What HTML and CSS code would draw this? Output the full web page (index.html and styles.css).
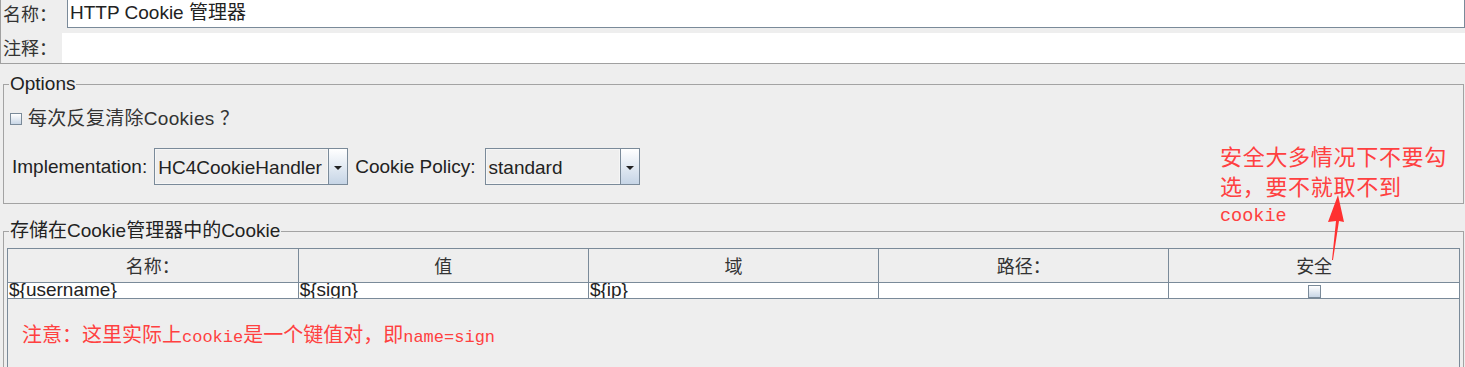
FILE: index.html
```html
<!DOCTYPE html>
<html lang="zh">
<head>
    <meta charset="UTF-8">
    <title>HTTP Cookie 管理器</title>
    <link rel="stylesheet" href="styles.css">
</head>
<body>
    <div class="top-panel">
        <div class="field-row name-row">
            <label class="field-label">名称：</label>
            <div class="text-field">HTTP Cookie 管理器</div>
        </div>
        <div class="field-row comment-row">
            <label class="field-label">注释：</label>
            <div class="text-field plain"></div>
        </div>
    </div>

    <fieldset class="group options">
        <legend>Options</legend>
        <div class="check-row">
            <span class="checkbox"></span>
            <span class="check-label">每次反复清除Cookies ？</span>
        </div>
        <div class="combo-row">
            <span class="combo-label">Implementation:</span>
            <div class="combo impl">
                <div class="combo-value">HC4CookieHandler</div>
                <div class="combo-btn"><span class="arrow"></span></div>
            </div>
            <span class="combo-label">Cookie Policy:</span>
            <div class="combo policy">
                <div class="combo-value">standard</div>
                <div class="combo-btn"><span class="arrow"></span></div>
            </div>
        </div>
    </fieldset>

    <fieldset class="group cookies">
        <legend>存储在Cookie管理器中的Cookie</legend>
        <div class="table-pane">
            <table class="cookie-table">
                <thead>
                    <tr>
                        <th>名称：</th>
                        <th>值</th>
                        <th>域</th>
                        <th>路径：</th>
                        <th>安全</th>
                    </tr>
                </thead>
                <tbody>
                    <tr>
                        <td><div class="cell">${username}</div></td>
                        <td><div class="cell">${sign}</div></td>
                        <td><div class="cell">${ip}</div></td>
                        <td><div class="cell"></div></td>
                        <td><div class="cell center"><span class="checkbox small"></span></div></td>
                    </tr>
                </tbody>
            </table>
        </div>
    </fieldset>

    <!-- annotations drawn over the screenshot -->
    <div class="note note-secure">安全大多情况下不要勾<br>选，要不就取不到<br><span class="mono">cookie</span></div>
    <svg class="note-arrow" width="30" height="75" viewBox="0 0 30 75">
        <polygon points="13,0 19,27 14,26 8,65 7,65 11,26 3,27" fill="#ff3030"/>
    </svg>
    <div class="note note-pair">注意：这里实际上<span class="mono">cookie</span>是一个键值对，即<span class="mono">name=sign</span></div>
</body>
</html>
```

FILE: styles.css
```css
* {
    margin: 0;
    padding: 0;
    box-sizing: border-box;
}

body {
    font-family: "Liberation Sans", "Noto Sans CJK SC", sans-serif;
    font-size: 19px;
    color: #222;
    background: #eeeeee;
    width: 1465px;
    height: 367px;
    overflow: hidden;
    position: relative;
}

/* name / comment */
.top-panel {
    border-left: 1px solid #a0a0a0;
    border-bottom: 1px solid #a0a0a0;
    height: 64px;
}

.field-row {
    display: flex;
}

.name-row {
    height: 28px;
}

.comment-row {
    margin-top: 5px;
    height: 30px;
}

.field-label {
    font-family: "Noto Sans CJK SC", sans-serif;
    font-size: 18px;
    line-height: 26px;
    color: #333;
    padding-left: 2px;
    width: 66px;
}

.comment-row .field-label {
    width: 61px;
    line-height: 28px;
}

.text-field {
    flex: 1;
    background: white;
    border: 1px solid #7a8a99;
    border-top: 0;
    padding-left: 2px;
    line-height: 26px;
}

.text-field.plain {
    border: 0;
}

/* groups */
.group {
    border: 1px solid #a3a3a3;
    margin: 9px 1px 0 3px;
    min-width: 0;
}

.group legend {
    font-size: 19px;
    line-height: 22px;
    padding: 0 1px;
    color: #222;
}

.options {
    padding: 0 6px 18px;
}

.options legend {
    margin-left: -1px;
}

.check-row {
    display: flex;
    align-items: center;
    height: 24px;
    margin-top: 12px;
}

.checkbox {
    display: inline-block;
    width: 12px;
    height: 12px;
    border: 1px solid #7a8a99;
    background: linear-gradient(#ffffff, #c8d6e6);
}

.check-label {
    margin-left: 6px;
    line-height: 24px;
    color: #333;
    letter-spacing: 0.3px;
}

.combo-row {
    display: flex;
    align-items: center;
    margin-top: 17px;
    padding-left: 2px;
}

.combo-label {
    line-height: 37px;
}

.combo {
    display: flex;
    height: 37px;
    border: 1px solid #7a8a99;
    background: #eeeeee;
    margin: 0 7px 0 7px;
}

.impl {
    width: 194px;
}

.policy {
    width: 155px;
    margin-left: 9px;
}

.combo-value {
    flex: 1;
    padding-left: 2px;
    line-height: 35px;
    border: 1px solid #f6f6f6;
}

.combo-btn {
    width: 19px;
    border-left: 1px solid #7a8a99;
    background: linear-gradient(#ffffff, #c6d5e6);
    display: flex;
    align-items: center;
    justify-content: center;
}

.arrow {
    width: 0;
    height: 0;
    border-left: 4px solid transparent;
    border-right: 4px solid transparent;
    border-top: 4px solid #222;
    margin-top: 2px;
}

/* cookie table */
.cookies {
    margin-top: 16px;
    padding: 6px 3px 0;
    height: 148px;
}

.cookies legend {
    margin-left: 2px;
}

.table-pane {
    border: 1px solid #7a8a99;
    border-bottom: 0;
    height: 124px;
}

.cookie-table {
    width: 100%;
    border-collapse: collapse;
    table-layout: fixed;
}

.cookie-table th,
.cookie-table td {
    border-right: 1px solid #7a8a99;
    border-bottom: 1px solid #7a8a99;
}

.cookie-table th:last-child,
.cookie-table td:last-child {
    border-right: 0;
}

.cookie-table th {
    height: 33px;
    font-family: "Noto Sans CJK SC", sans-serif;
    font-weight: normal;
    font-size: 18px;
    color: #333;
    background: #eeeeee;
}

.cookie-table td {
    background: white;
    padding: 0;
}

.cell {
    height: 15px;
    line-height: 13px;
    padding-left: 1px;
    overflow: hidden;
}

.cell.center {
    display: flex;
    justify-content: center;
    padding-top: 2px;
}

.checkbox.small {
    width: 13px;
    height: 13px;
}

/* red annotations */
.note {
    position: absolute;
    color: #ff4040;
    font-family: "Noto Sans CJK SC", sans-serif;
}

.note .mono {
    font-family: "Liberation Mono", monospace;
}

.note-secure {
    left: 1220px;
    top: 140px;
    font-size: 22px;
    letter-spacing: 0.7px;
    line-height: 30px;
}

.note-secure .mono {
    font-size: 18.5px;
    letter-spacing: 0;
    position: relative;
    top: -4px;
}

.note-pair {
    left: 22px;
    top: 321px;
    font-size: 20px;
    line-height: 26px;
}

.note-pair .mono {
    font-size: 17px;
}

.note-arrow {
    position: absolute;
    left: 1325px;
    top: 195px;
}
```
